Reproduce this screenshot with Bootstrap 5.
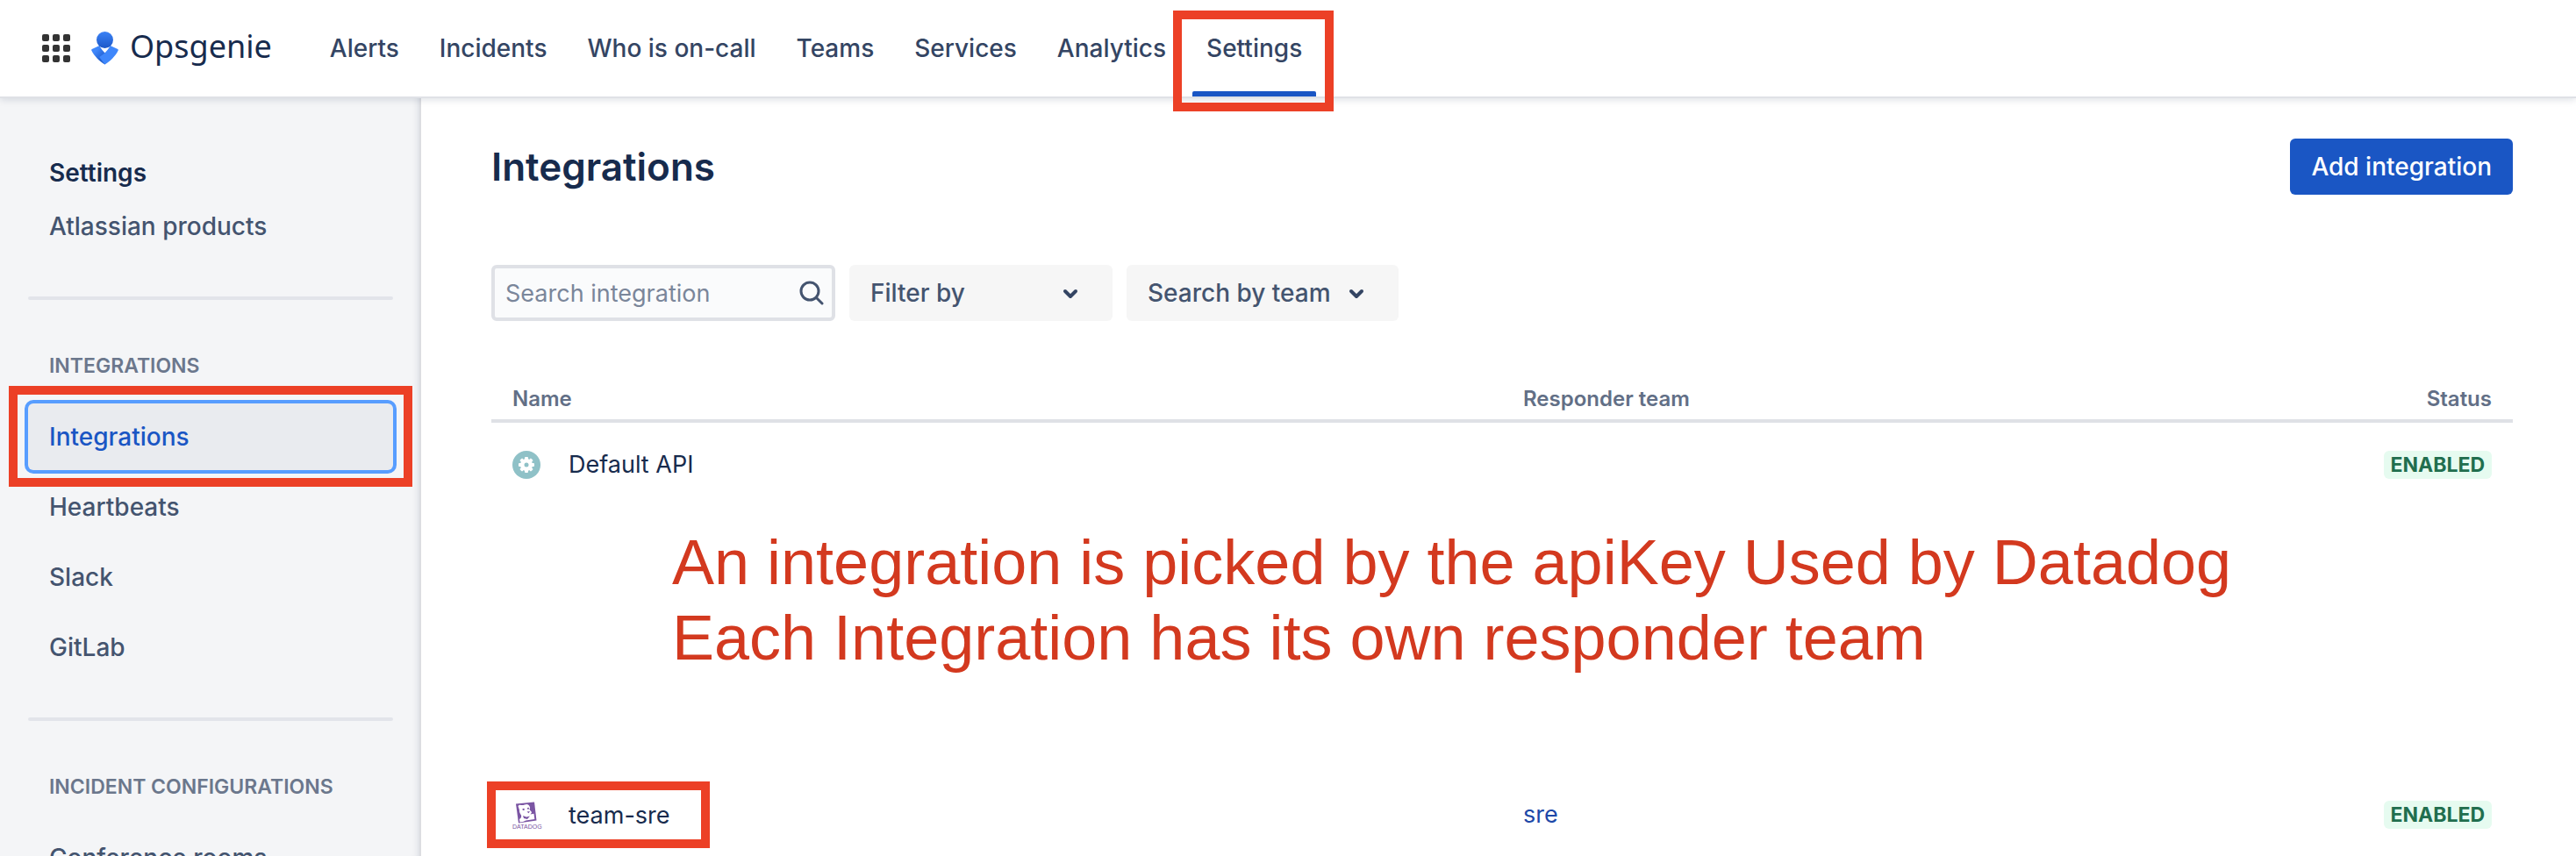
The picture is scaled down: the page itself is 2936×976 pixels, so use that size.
<!DOCTYPE html>
<html lang="en">
<head>
<meta charset="utf-8">
<meta name="viewport" content="width=device-width, initial-scale=1">
<title>Integrations - Opsgenie</title>
<link href="https://cdn.jsdelivr.net/npm/bootstrap@5.3.0/dist/css/bootstrap.min.css" rel="stylesheet">
<style>
  :root {
    --ink: #172b4d;
    --ink-soft: #44546f;
    --ink-nav: #344563;
    --ink-muted: #626f86;
    --brand: #1a56c4;
    --line: #dfe1e6;
    --callout: #ec4026;
  }
  body { font-family: Inter, "Noto Sans", sans-serif; font-size: 27px; line-height: 40px; color: var(--ink); background: #fff; }
  a { text-decoration: none; }

  /* top bar */
  .topbar { height: 110px; background: #fff; box-shadow: 0 2px 0 #dfe1e6, 0 4px 8px rgba(9, 30, 66, .13); z-index: 3; padding: 0 48px; }
  .logo-text { font-family: "Noto Sans", sans-serif; font-size: 36px; line-height: 48px; padding-bottom: 4px; color: var(--ink); }
  .switcher { width: 32px; height: 32px; }
  .topnav { margin-left: 50px; gap: 14px; }
  .topnav .nav-link { padding: 0 16px; font-size: 28px; font-weight: 500; color: var(--ink-nav); height: 110px; }
  .topnav .nav-link.active::after { content: ""; position: absolute; left: 0; right: 0; bottom: 0; height: 6px; background: var(--brand); border-radius: 2px 2px 0 0; }

  /* red frames drawn over the page */
  .callout-frame { position: absolute; border: 10px solid var(--callout); pointer-events: none; z-index: 4; }
  .frame-nav { inset: 12px -20px -17px -22px; }
  .frame-side { inset: -20px -22px -19px -22px; }
  .frame-row { inset: -19px -45px -17px -29px; }

  /* sidebar */
  .sidebar { width: 480px; background: #f4f5f7; padding: 64px 32px 0; box-shadow: inset -2px 0 0 #dcdde1, inset -10px 0 8px -8px rgba(9, 30, 66, .16); }
  .side-title { font-weight: 600; font-size: 28px; line-height: 46px; padding: 0 24px; margin: 0; }
  .side-link { display: flex; align-items: center; height: 76px; padding: 0 24px; color: var(--ink-soft); font-size: 28px; font-weight: 500; border-radius: 6px; }
  .side-link.current { background: #e9ebef; color: var(--brand); box-shadow: 0 0 0 4px #579dff; }
  .side-rule { height: 4px; margin: 42px 0 58px; border-radius: 2px; background: #e2e4ea; border: 0; opacity: 1; }
  .side-heading { font-size: 23px; line-height: 34px; font-weight: 600; color: #6b778c; padding: 0 24px; margin: 0 0 26px; text-transform: uppercase; }

  /* main */
  .content-area { padding: 48px 72px 0 80px; }
  .page-title { font-size: 44px; line-height: 64px; font-weight: 600; margin: 0; }
  .btn-add { height: 64px; padding: 0 24px; border-radius: 6px; background: var(--brand); border: 0; color: #fff; font-size: 28px; font-weight: 500; }
  .filters { margin-top: 80px; }
  .search-wrap { width: 392px; height: 64px; border: 4px solid #dfe1e6; border-radius: 6px; background: #fafbfc; padding: 0 9px 0 12px; }
  .search-wrap input { border: 0; background: transparent; padding: 2px 0 0; outline: 0; font-size: 27px; color: var(--ink); min-width: 0; }
  .search-wrap input::placeholder { color: #7a869a; opacity: 1; }
  .btn-filter { height: 64px; border: 0; border-radius: 6px; background: #f6f6f6; color: var(--ink-soft); font-size: 28px; font-weight: 500; padding: 0 36px 0 24px; }
  .w-filter { width: 300px; }
  .w-team { width: 310px; }

  .list-table { --bs-table-bg: transparent; table-layout: fixed; margin: 66px 0 0; color: var(--ink); }
  .list-table th { padding: 0 24px; height: 48px; font-size: 24px; font-weight: 600; color: var(--ink-muted); border-bottom: 4px solid var(--line); vertical-align: middle; }
  .list-table td { padding: 0 24px; height: 98px; border: 0; vertical-align: middle; }
  .list-table td.note { height: 302px; padding-left: 206px; padding-bottom: 90px; font-family: "Liberation Sans", Arial, sans-serif; font-size: 72px; line-height: 86px; color: #d3391f; }
  .status-pill { height: 32px; line-height: 32px; padding: 0 8px; border-radius: 6px; background: #e6fbf0; color: #216e4e; font-size: 23px; font-weight: 700; }
  .team-link { color: #1d48a8; }
</style>
</head>
<body>
<div class="d-flex flex-column vh-100 overflow-hidden">
  <header class="topbar d-flex align-items-center position-relative flex-shrink-0">
    <button type="button" class="btn p-0 border-0 d-flex switcher" aria-label="Switch product">
      <svg width="32" height="32" viewBox="0 0 32 32" fill="#333">
        <rect width="8" height="8" rx="2"/><rect x="12" width="8" height="8" rx="2"/><rect x="24" width="8" height="8" rx="2"/>
        <rect y="12" width="8" height="8" rx="2"/><rect x="12" y="12" width="8" height="8" rx="2"/><rect x="24" y="12" width="8" height="8" rx="2"/>
        <rect y="24" width="8" height="8" rx="2"/><rect x="12" y="24" width="8" height="8" rx="2"/><rect x="24" y="24" width="8" height="8" rx="2"/>
      </svg>
    </button>
    <a href="#" class="d-flex align-items-center ms-4 gap-2">
      <svg class="me-1" width="32" height="38" viewBox="0 0 32 38" aria-hidden="true">
        <defs>
          <linearGradient id="head" x1="0" y1="0" x2="0" y2="1"><stop offset="0" stop-color="#3b82f6"/><stop offset="1" stop-color="#1d58c8"/></linearGradient>
          <linearGradient id="arm" x1="0.2" y1="0.1" x2="0.7" y2="0.6"><stop offset="0.2" stop-color="#3f87fb"/><stop offset="1" stop-color="#1f5ccc"/></linearGradient>
        </defs>
        <path d="M15.500 37.500C9 33.500 3.500 28 .3 21.500q-.5-1 .5-1.500l7.500-3.500q1-.4 1.500.5c2.700 5 7 9 12 12-2 3-4 5.800-6.300 8.500Z" fill="url(#arm)"/>
        <path d="M15.500 37.500C22 33.500 27.500 28 30.700 21.500q.5-1-.5-1.500l-7.500-3.500q-1-.4-1.500.5c-2.700 5-7 9-12 12 2 3 4 5.800 6.300 8.500Z" fill="#3f87fb"/>
        <circle cx="15.500" cy="9.500" r="9.500" fill="url(#head)"/>
      </svg>
      <span class="logo-text">Opsgenie</span>
    </a>
    <nav class="nav topnav flex-nowrap">
      <a class="nav-link d-flex align-items-center" href="#">Alerts</a>
      <a class="nav-link d-flex align-items-center" href="#">Incidents</a>
      <a class="nav-link d-flex align-items-center text-nowrap" href="#">Who is on-call</a>
      <a class="nav-link d-flex align-items-center" href="#">Teams</a>
      <a class="nav-link d-flex align-items-center" href="#">Services</a>
      <a class="nav-link d-flex align-items-center" href="#">Analytics</a>
      <a class="nav-link active position-relative d-flex align-items-center" href="#" aria-current="page">Settings<span class="callout-frame frame-nav"></span></a>
    </nav>
  </header>

  <div class="d-flex flex-grow-1 overflow-hidden">
    <aside class="sidebar flex-shrink-0 overflow-hidden">
      <h2 class="side-title">Settings</h2>
      <a class="side-link" href="#">Atlassian products</a>
      <hr class="side-rule">
      <h3 class="side-heading">Integrations</h3>
      <nav class="d-flex flex-column gap-1">
        <a class="side-link current position-relative" href="#" aria-current="page">Integrations<span class="callout-frame frame-side"></span></a>
        <a class="side-link" href="#">Heartbeats</a>
        <a class="side-link" href="#">Slack</a>
        <a class="side-link" href="#">GitLab</a>
      </nav>
      <hr class="side-rule">
      <h3 class="side-heading text-nowrap">Incident configurations</h3>
      <a class="side-link" href="#">Conference rooms</a>
    </aside>

    <main class="content-area flex-grow-1 overflow-hidden">
      <div class="d-flex justify-content-between align-items-center">
        <h1 class="page-title">Integrations</h1>
        <button type="button" class="btn btn-add">Add integration</button>
      </div>

      <div class="d-flex gap-3 filters">
        <div class="search-wrap d-flex align-items-center">
          <input type="search" class="w-100" placeholder="Search integration" aria-label="Search integration">
          <svg class="flex-shrink-0" width="28" height="28" viewBox="0 0 28 28" fill="none" stroke="#44546f" stroke-width="3" stroke-linecap="round" aria-hidden="true"><circle cx="12" cy="12" r="10"/><path d="M19.500 19.500 26 26"/></svg>
        </div>
        <button type="button" class="btn btn-filter w-filter d-flex align-items-center justify-content-between">Filter by
          <svg width="24" height="16" viewBox="0 0 24 16" fill="none" stroke="#344563" stroke-width="4" stroke-linecap="round" stroke-linejoin="round" aria-hidden="true"><path d="M6 6l6 6 6-6"/></svg>
        </button>
        <button type="button" class="btn btn-filter w-team d-flex align-items-center justify-content-between text-nowrap">Search by team
          <svg width="24" height="16" viewBox="0 0 24 16" fill="none" stroke="#344563" stroke-width="4" stroke-linecap="round" stroke-linejoin="round" aria-hidden="true"><path d="M6 6l6 6 6-6"/></svg>
        </button>
      </div>

      <table class="table list-table">
        <colgroup><col style="width:50%"><col style="width:35%"><col style="width:15%"></colgroup>
        <thead>
          <tr><th scope="col">Name</th><th scope="col">Responder team</th><th scope="col" class="text-end">Status</th></tr>
        </thead>
        <tbody>
          <tr>
            <td>
              <div class="d-flex align-items-center">
                <svg class="me-3" width="32" height="32" viewBox="0 0 32 32" aria-hidden="true">
                  <circle cx="16" cy="16" r="16" fill="#8fc1c7"/>
                  <g fill="#fff"><circle cx="16" cy="16" r="7"/><g id="tooth"><rect x="14" y="7" width="4" height="18" rx="1"/><rect x="7" y="14" width="18" height="4" rx="1"/></g><use href="#tooth" transform="rotate(45 16 16)"/></g>
                  <circle cx="16" cy="16" r="2.500" fill="#8fc1c7"/>
                </svg>
                <span class="ms-3">Default API</span>
              </div>
            </td>
            <td></td>
            <td><div class="d-flex justify-content-end"><span class="status-pill">ENABLED</span></div></td>
          </tr>
          <tr>
            <td colspan="3" class="note">An integration is picked by the apiKey Used by Datadog<br>Each Integration has its own responder team</td>
          </tr>
          <tr>
            <td>
              <div class="d-inline-flex align-items-center position-relative align-middle">
                <svg class="me-3 overflow-visible" width="32" height="32" viewBox="0 0 32 32" aria-hidden="true">
                  <path d="M4 2.500 25 .5l2.500 21L7 24.500Z" fill="#7b55a3"/>
                  <path d="M6.500 5c1.500-2 3-1 4.500-1 3 0 5-2 7-.5 1.500 1 3 4 1.500 5 .5 2 2.500 2.500 2.500 4l-1.500 2 4-.7.8 6.200-10 1.500-3.300 1.500-3.500.5-.5-3.500c2-1 2.500-3 2-4.500-1-1.500-2.500-4-2-6Z" fill="#fff"/>
                  <path d="M11.500 8l2-.3.3 2-2 .3Zm5.500-1 1.800-.2.2 1.700-1.800.2Zm-.5 4.500 3.500-.5-1.500 2.200ZM12 16l4 1.500 4-1-3 3.500-4-1Z" fill="#7b55a3"/>
                  <text x="0" y="31" font-family="Liberation Sans, sans-serif" font-size="7" fill="#7b55a3">DATADOG</text>
                </svg>
                <span class="ms-3">team-sre</span>
                <span class="callout-frame frame-row"></span>
              </div>
            </td>
            <td><a class="team-link" href="#">sre</a></td>
            <td><div class="d-flex justify-content-end"><span class="status-pill">ENABLED</span></div></td>
          </tr>
        </tbody>
      </table>
    </main>
  </div>
</div>
<script src="https://cdn.jsdelivr.net/npm/bootstrap@5.3.0/dist/js/bootstrap.bundle.min.js"></script>
</body>
</html>
